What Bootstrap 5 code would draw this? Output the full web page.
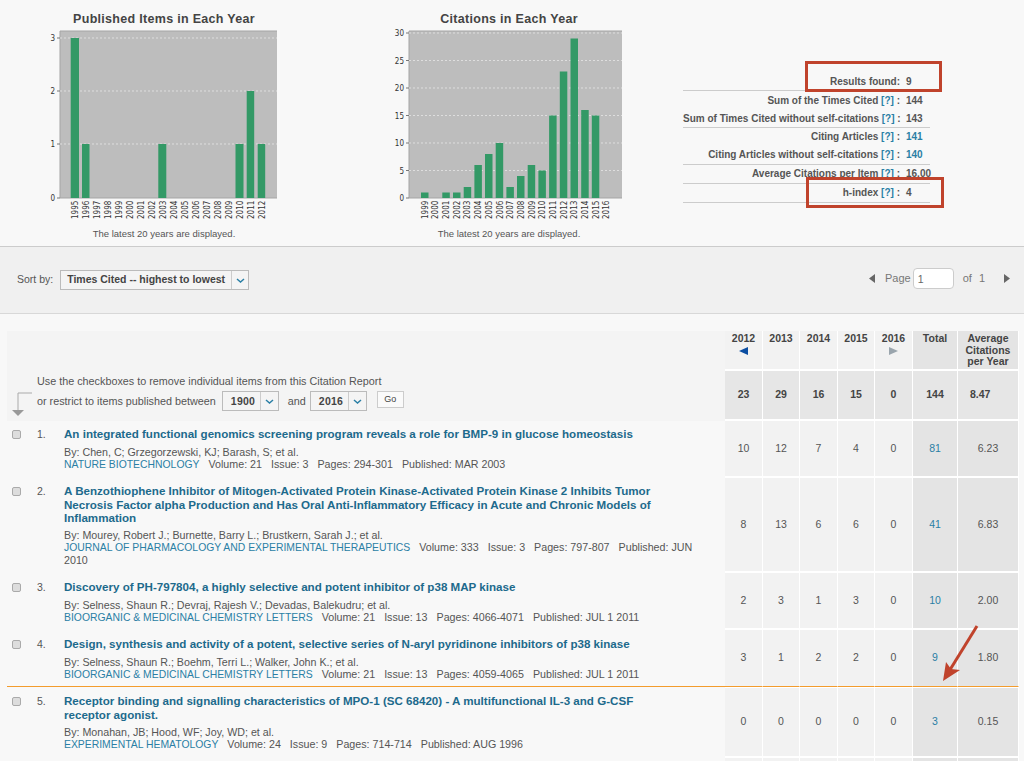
<!DOCTYPE html>
<html lang="en">
<head>
<meta charset="utf-8">
<title>Citation Report</title>
<link href="https://cdn.jsdelivr.net/npm/bootstrap@5.3.0/dist/css/bootstrap.min.css" rel="stylesheet">
<style>
html,body{height:761px;overflow:hidden;background:#f8f8f8;}
body{font-family:"Liberation Sans",Arial,sans-serif;font-size:10.5px;color:#555;position:relative;}
a{text-decoration:none;color:#2a7fa5;}
.top-band{height:247px;border-bottom:1px solid #ccc;background:#f8f8f8;}
.chart-a{width:328px;}
.chart-b{width:338px;margin-left:12px;}
.chart-title{font-size:12.5px;font-weight:700;color:#444;text-align:center;height:26px;padding-top:12px;line-height:14px;letter-spacing:.3px;}
.chart-svg{display:block;}
.chart-cap{font-size:9.5px;color:#555;text-align:center;line-height:12px;margin-top:7px;}
.ax{font-family:"DejaVu Sans",sans-serif;font-size:8px;fill:#333;font-stretch:condensed;}
.stats{width:247px;margin-left:5px;padding-top:72px;font-weight:700;color:#555;font-size:10px;}
.stat-group{border-bottom:1px solid #ccc;}
.stat-row{height:18px;line-height:19px;}
.stat-group.late .stat-row{line-height:18px;}
.stat-label{width:217px;text-align:right;white-space:nowrap;flex:none;}
.stat-val{margin-left:6px;}
.sort-band{height:67px;background:#f0f0f0;border-bottom:1px solid #d8d8d8;padding:0 13px 0 17px;}
.fake-select{display:inline-flex;align-items:center;height:20px;border:1px solid #bbb;background:#f4f4f4;color:#444;font-weight:700;font-size:10.5px;white-space:nowrap;}
.fake-select .val{padding:0 6px;white-space:nowrap;}
.fake-select .chev{width:18px;flex:none;height:100%;border-left:1px solid #ccc;display:flex;align-items:center;justify-content:center;}
.sel-sort{width:189px;margin-left:7px;justify-content:space-between;}
.sel-year{width:57px;justify-content:space-between;letter-spacing:.2px;}
.sel-year .val{padding:0 0 0 8px;}
.sel-first{margin-left:6px;}
.pager{color:#777;font-size:11px;margin-bottom:3px;}
.pg-left{margin-right:9px;}
.pg-of{margin-left:9px;}
.pg-num{margin-left:7px;}
.pg-right{margin-left:19px;}
.page-input{width:41px;height:21px;border:1px solid #ccc;border-radius:4px;background:#fff;font-size:10.5px;padding:0 4px;color:#666;margin-left:2px;}
.go-btn{width:27px;height:17px;border:1px solid #ccc;background:#fafafa;font-size:9px;color:#444;padding:0;line-height:15px;margin-left:10px;margin-bottom:3px;}
.wrap-table{padding:17px 5px 0 7px;}
.cite{border-collapse:separate;border-spacing:0;table-layout:fixed;width:1012px;}
.cite td,.cite th{border-right:1px solid #fff;border-bottom:2px solid #fff;background:#f2f2f2;text-align:center;vertical-align:middle;font-size:10.5px;padding:0;color:#555;}
.cite .left-head{background:#f4f4f4;border:0;vertical-align:bottom;text-align:left;font-weight:400;font-size:10.8px;}
.cite .left-cell{background:transparent;border:0;text-align:left;vertical-align:top;padding-top:7px;}
.cite .left-cell.low{padding-top:8px;}
.cite th.yr{vertical-align:top;padding-top:2px;font-weight:700;color:#444;line-height:11.5px;}
.cite th.dark,.cite td.dark{background:#e4e4e4;}
.cite td.sum{background:#e6e6e6;font-weight:700;color:#444;}
.cite td.sum.avg{text-align:left;padding-left:12px;}
.cite td.r4{border-bottom:1px solid #f39c2d;}
.cite td.r5{border-top:1px solid #fff;}
.arrow-box{width:26px;flex:none;margin:0 0 4px 1px;}
.head-inner{padding:0 0 10px 3px;}
.head-line{line-height:19px;color:#555;}
.and-word{margin:0 4px 0 9px;}
.chk{width:9px;height:9px;margin:2px 0 0 5px;flex:none;appearance:none;background:#ddd;border:1px solid #aaa;border-radius:2px;display:block;}
.num{width:27px;margin-left:16px;flex:none;line-height:13px;color:#555;}
.rec-title{display:block;width:600px;font-size:11.6px;font-weight:700;color:#1d6a8c;line-height:13.5px;margin-top:-1px;margin-bottom:5px;}
.rec-title.tight{margin-bottom:4px;}
.rec-meta{width:640px;line-height:12px;color:#555;font-size:10.7px;}
.rec-meta span{margin-left:9px;}
.rec-meta a{color:#2a7fa5;font-size:10.4px;}
.overlay{position:absolute;left:0;top:0;pointer-events:none;}
.redbox{position:absolute;border:3px solid #c0432c;}
.rb1{left:805px;top:61px;width:137px;height:31px;}
.rb2{left:806px;top:177px;width:138px;height:31px;}
</style>
</head>
<body>
<div class="top-band d-flex">
  <div class="chart-a">
    <div class="chart-title">Published Items in Each Year</div>
    <svg class="chart-svg" width="328" height="195" viewBox="0 26 328 195">
      <rect x="60" y="31" width="217" height="167" fill="#bdbdbd"/>
      <path d="M60 31H277M60 31V198H277" fill="none" stroke="#a5a5a5"/>
      <g stroke="#dedede" stroke-dasharray="2 2"><path d="M60 38H277M60 91H277M60 144H277"/></g>
      <g stroke="#777"><path d="M57 38H60M57 91H60M57 144H60M57 198H60"/></g>
      <g fill="#339966">
        <rect x="70.7" y="38" width="8.3" height="160"/><rect x="82" y="144" width="7.5" height="54"/>
        <rect x="158.3" y="144" width="8" height="54"/><rect x="235.5" y="144" width="8" height="54"/>
        <rect x="246.7" y="91" width="7.5" height="107"/><rect x="257.7" y="144" width="7.5" height="54"/>
      </g>
      <g class="ax" text-anchor="end"><text x="55" y="41">3</text><text x="55" y="94">2</text><text x="55" y="147">1</text><text x="55" y="201">0</text></g>
      <g class="ax" text-anchor="start">
        <text transform="translate(77.5,219) rotate(-90)">1995</text><text transform="translate(88.5,219) rotate(-90)">1996</text><text transform="translate(99.5,219) rotate(-90)">1997</text><text transform="translate(110.5,219) rotate(-90)">1998</text><text transform="translate(121.5,219) rotate(-90)">1999</text><text transform="translate(132.5,219) rotate(-90)">2000</text><text transform="translate(143.5,219) rotate(-90)">2001</text><text transform="translate(154.5,219) rotate(-90)">2002</text><text transform="translate(165.5,219) rotate(-90)">2003</text><text transform="translate(176.5,219) rotate(-90)">2004</text><text transform="translate(187.5,219) rotate(-90)">2005</text><text transform="translate(198.5,219) rotate(-90)">2006</text><text transform="translate(209.5,219) rotate(-90)">2007</text><text transform="translate(220.5,219) rotate(-90)">2008</text><text transform="translate(231.5,219) rotate(-90)">2009</text><text transform="translate(242.5,219) rotate(-90)">2010</text><text transform="translate(253.5,219) rotate(-90)">2011</text><text transform="translate(264.5,219) rotate(-90)">2012</text>
      </g>
    </svg>
    <div class="chart-cap">The latest 20 years are displayed.</div>
  </div>
  <div class="chart-b">
    <div class="chart-title">Citations in Each Year</div>
    <svg class="chart-svg" width="338" height="195" viewBox="340 26 338 195">
      <rect x="409" y="31" width="213" height="167" fill="#bdbdbd"/>
      <path d="M409 31H622M409 31V198H622" fill="none" stroke="#a5a5a5"/>
      <g stroke="#dedede" stroke-dasharray="2 2"><path d="M409 33H622M409 60.5H622M409 88H622M409 115.5H622M409 143H622M409 170.5H622"/></g>
      <g stroke="#777"><path d="M406 33H409M406 60.5H409M406 88H409M406 115.5H409M406 143H409M406 170.5H409M406 198H409"/></g>
      <g fill="#339966">
        <rect x="421" y="192.5" width="7.5" height="5.5"/><rect x="442.3" y="192.5" width="7.5" height="5.5"/><rect x="453" y="192.5" width="7.5" height="5.5"/><rect x="463.7" y="187" width="7.5" height="11"/><rect x="474.4" y="165" width="7.5" height="33"/><rect x="485" y="154" width="7.5" height="44"/><rect x="495.7" y="143" width="7.5" height="55"/><rect x="506.4" y="187" width="7.5" height="11"/><rect x="517" y="176" width="7.5" height="22"/><rect x="527.7" y="165" width="7.5" height="33"/><rect x="538.4" y="170.5" width="7.5" height="27.5"/><rect x="549.1" y="115.5" width="7.5" height="82.5"/><rect x="559.8" y="71.5" width="7.5" height="126.5"/><rect x="570.5" y="38.5" width="7.5" height="159.5"/><rect x="581.2" y="110" width="7.5" height="88"/><rect x="591.8" y="115.5" width="7.5" height="82.5"/>
      </g>
      <g class="ax" text-anchor="end"><text x="404" y="36">30</text><text x="404" y="63.5">25</text><text x="404" y="91">20</text><text x="404" y="118.5">15</text><text x="404" y="146">10</text><text x="404" y="173.5">5</text><text x="404" y="201">0</text></g>
      <g class="ax" text-anchor="start">
        <text transform="translate(427.7,219) rotate(-90)">1999</text><text transform="translate(438.4,219) rotate(-90)">2000</text><text transform="translate(449.1,219) rotate(-90)">2001</text><text transform="translate(459.7,219) rotate(-90)">2002</text><text transform="translate(470.4,219) rotate(-90)">2003</text><text transform="translate(481.1,219) rotate(-90)">2004</text><text transform="translate(491.8,219) rotate(-90)">2005</text><text transform="translate(502.5,219) rotate(-90)">2006</text><text transform="translate(513.1,219) rotate(-90)">2007</text><text transform="translate(523.8,219) rotate(-90)">2008</text><text transform="translate(534.5,219) rotate(-90)">2009</text><text transform="translate(545.2,219) rotate(-90)">2010</text><text transform="translate(555.9,219) rotate(-90)">2011</text><text transform="translate(566.5,219) rotate(-90)">2012</text><text transform="translate(577.2,219) rotate(-90)">2013</text><text transform="translate(587.9,219) rotate(-90)">2014</text><text transform="translate(598.6,219) rotate(-90)">2015</text><text transform="translate(609.3,219) rotate(-90)">2016</text>
      </g>
    </svg>
    <div class="chart-cap">The latest 20 years are displayed.</div>
  </div>
  <div class="stats">
    <div class="stat-group"><div class="stat-row d-flex"><div class="stat-label">Results found:</div><div class="stat-val">9</div></div></div>
    <div class="stat-group">
      <div class="stat-row d-flex"><div class="stat-label">Sum of the Times Cited <a href="#">[?]</a> :</div><div class="stat-val">144</div></div>
      <div class="stat-row d-flex"><div class="stat-label">Sum of Times Cited without self-citations <a href="#">[?]</a> :</div><div class="stat-val">143</div></div>
    </div>
    <div class="stat-group late">
      <div class="stat-row d-flex"><div class="stat-label">Citing Articles <a href="#">[?]</a> :</div><div class="stat-val"><a href="#">141</a></div></div>
      <div class="stat-row d-flex"><div class="stat-label">Citing Articles without self-citations <a href="#">[?]</a> :</div><div class="stat-val"><a href="#">140</a></div></div>
    </div>
    <div class="stat-group late"><div class="stat-row d-flex"><div class="stat-label">Average Citations per Item <a href="#">[?]</a> :</div><div class="stat-val">16.00</div></div></div>
    <div class="stat-group late"><div class="stat-row d-flex"><div class="stat-label">h-index <a href="#">[?]</a> :</div><div class="stat-val">4</div></div></div>
  </div>
</div>

<div class="sort-band d-flex align-items-center justify-content-between">
  <div class="d-flex align-items-center">
    <span>Sort by:</span>
    <div class="fake-select sel-sort"><span class="val">Times Cited -- highest to lowest</span><span class="chev"><svg width="9" height="5" viewBox="0 0 9 5"><path d="M1 1l3.500 3L8 1" fill="none" stroke="#2a7fa5" stroke-width="1.5"/></svg></span></div>
  </div>
  <div class="pager d-flex align-items-center">
    <svg class="pg-left" width="7" height="9" viewBox="0 0 7 9"><path d="M6 0v9L0 4.500z" fill="#666"/></svg>
    <span>Page</span>
    <input class="page-input" type="text" value="1" aria-label="Page">
    <span class="pg-of">of</span><span class="pg-num">1</span>
    <svg class="pg-right" width="7" height="9" viewBox="0 0 7 9"><path d="M0 0v9l6-4.500z" fill="#666"/></svg>
  </div>
</div>

<div class="wrap-table">
<table class="cite">
  <colgroup><col style="width:718px"><col style="width:38px"><col style="width:37px"><col style="width:38px"><col style="width:37px"><col style="width:38px"><col style="width:45px"><col style="width:61px"></colgroup>
  <tr style="height:40px">
    <th class="left-head" rowspan="2">
      <div class="d-flex align-items-end">
        <svg width="26" height="26" viewBox="0 0 26 26" class="arrow-box"><path d="M24 2H10V19" fill="none" stroke="#aaa"/><path d="M4 19H16L10 25z" fill="#999"/></svg>
        <div class="head-inner">
          <div class="head-line">Use the checkboxes to remove individual items from this Citation Report</div>
          <div class="head-line d-flex align-items-center">or restrict to items published between
            <div class="fake-select sel-year sel-first"><span class="val">1900</span><span class="chev"><svg width="9" height="5" viewBox="0 0 9 5"><path d="M1 1l3.500 3L8 1" fill="none" stroke="#2a7fa5" stroke-width="1.5"/></svg></span></div>
            <span class="and-word">and</span>
            <div class="fake-select sel-year"><span class="val">2016</span><span class="chev"><svg width="9" height="5" viewBox="0 0 9 5"><path d="M1 1l3.500 3L8 1" fill="none" stroke="#2a7fa5" stroke-width="1.5"/></svg></span></div>
            <button class="go-btn" type="button">Go</button>
          </div>
        </div>
      </div>
    </th>
    <th class="yr">2012<br><svg width="9" height="8" viewBox="0 0 9 8"><path d="M9 0v8L0 4z" fill="#0b4ea2"/></svg></th>
    <th class="yr">2013</th><th class="yr">2014</th><th class="yr">2015</th>
    <th class="yr">2016<br><svg width="9" height="8" viewBox="0 0 9 8"><path d="M0 0v8l9-4z" fill="#9aa5ad"/></svg></th>
    <th class="yr dark">Total</th><th class="yr dark">Average Citations per Year</th>
  </tr>
  <tr style="height:50px"><td class="sum">23</td><td class="sum">29</td><td class="sum">16</td><td class="sum">15</td><td class="sum">0</td><td class="sum">144</td><td class="sum avg">8.47</td></tr>

  <tr style="height:57px">
    <td class="left-cell"><div class="d-flex"><input class="chk" type="checkbox" aria-label="Select 1"><div class="num">1.</div><div>
      <a class="rec-title" href="#">An integrated functional genomics screening program reveals a role for BMP-9 in glucose homeostasis</a>
      <div class="rec-meta">By: Chen, C; Grzegorzewski, KJ; Barash, S; et al.<br><a href="#">NATURE BIOTECHNOLOGY</a><span>Volume: 21</span><span>Issue: 3</span><span>Pages: 294-301</span><span>Published: MAR 2003</span></div>
    </div></div></td>
    <td>10</td><td>12</td><td>7</td><td>4</td><td>0</td><td class="dark"><a href="#">81</a></td><td class="dark">6.23</td>
  </tr>
  <tr style="height:95px">
    <td class="left-cell"><div class="d-flex"><input class="chk" type="checkbox" aria-label="Select 2"><div class="num">2.</div><div>
      <a class="rec-title tight" href="#">A Benzothiophene Inhibitor of Mitogen-Activated Protein Kinase-Activated Protein Kinase 2 Inhibits Tumor Necrosis Factor alpha Production and Has Oral Anti-Inflammatory Efficacy in Acute and Chronic Models of Inflammation</a>
      <div class="rec-meta">By: Mourey, Robert J.; Burnette, Barry L.; Brustkern, Sarah J.; et al.<br><a href="#">JOURNAL OF PHARMACOLOGY AND EXPERIMENTAL THERAPEUTICS</a><span>Volume: 333</span><span>Issue: 3</span><span>Pages: 797-807</span><span>Published: JUN</span><br>2010</div>
    </div></div></td>
    <td>8</td><td>13</td><td>6</td><td>6</td><td>0</td><td class="dark"><a href="#">41</a></td><td class="dark">6.83</td>
  </tr>
  <tr style="height:57px">
    <td class="left-cell low"><div class="d-flex"><input class="chk" type="checkbox" aria-label="Select 3"><div class="num">3.</div><div>
      <a class="rec-title" href="#">Discovery of PH-797804, a highly selective and potent inhibitor of p38 MAP kinase</a>
      <div class="rec-meta">By: Selness, Shaun R.; Devraj, Rajesh V.; Devadas, Balekudru; et al.<br><a href="#">BIOORGANIC &amp; MEDICINAL CHEMISTRY LETTERS</a><span>Volume: 21</span><span>Issue: 13</span><span>Pages: 4066-4071</span><span>Published: JUL 1 2011</span></div>
    </div></div></td>
    <td>2</td><td>3</td><td>1</td><td>3</td><td>0</td><td class="dark"><a href="#">10</a></td><td class="dark">2.00</td>
  </tr>
  <tr style="height:57px">
    <td class="left-cell low r4"><div class="d-flex"><input class="chk" type="checkbox" aria-label="Select 4"><div class="num">4.</div><div>
      <a class="rec-title" href="#">Design, synthesis and activity of a potent, selective series of N-aryl pyridinone inhibitors of p38 kinase</a>
      <div class="rec-meta">By: Selness, Shaun R.; Boehm, Terri L.; Walker, John K.; et al.<br><a href="#">BIOORGANIC &amp; MEDICINAL CHEMISTRY LETTERS</a><span>Volume: 21</span><span>Issue: 13</span><span>Pages: 4059-4065</span><span>Published: JUL 1 2011</span></div>
    </div></div></td>
    <td class="r4">3</td><td class="r4">1</td><td class="r4">2</td><td class="r4">2</td><td class="r4">0</td><td class="dark r4"><a href="#">9</a></td><td class="dark r4">1.80</td>
  </tr>
  <tr style="height:71px">
    <td class="left-cell low"><div class="d-flex"><input class="chk" type="checkbox" aria-label="Select 5"><div class="num">5.</div><div>
      <a class="rec-title" href="#">Receptor binding and signalling characteristics of MPO-1 (SC 68420) - A multifunctional IL-3 and G-CSF receptor agonist.</a>
      <div class="rec-meta">By: Monahan, JB; Hood, WF; Joy, WD; et al.<br><a href="#">EXPERIMENTAL HEMATOLOGY</a><span>Volume: 24</span><span>Issue: 9</span><span>Pages: 714-714</span><span>Published: AUG 1996</span></div>
    </div></div></td>
    <td class="r5">0</td><td class="r5">0</td><td class="r5">0</td><td class="r5">0</td><td class="r5">0</td><td class="dark r5"><a href="#">3</a></td><td class="dark r5">0.15</td>
  </tr>
  <tr style="height:20px"><td class="left-cell"></td><td></td><td></td><td></td><td></td><td></td><td class="dark"></td><td class="dark"></td></tr>
</table>
</div>

<div class="redbox rb1"></div>
<div class="redbox rb2"></div>
<svg class="overlay" width="1024" height="761" viewBox="0 0 1024 761" aria-hidden="true">
  <path d="M977 626L948 673" stroke="#c0432c" stroke-width="3" fill="none"/>
  <path d="M943 681L946 662L951 669L960 670z" fill="#c0432c"/>
</svg>
<script src="https://cdn.jsdelivr.net/npm/bootstrap@5.3.0/dist/js/bootstrap.bundle.min.js"></script>
</body>
</html>
